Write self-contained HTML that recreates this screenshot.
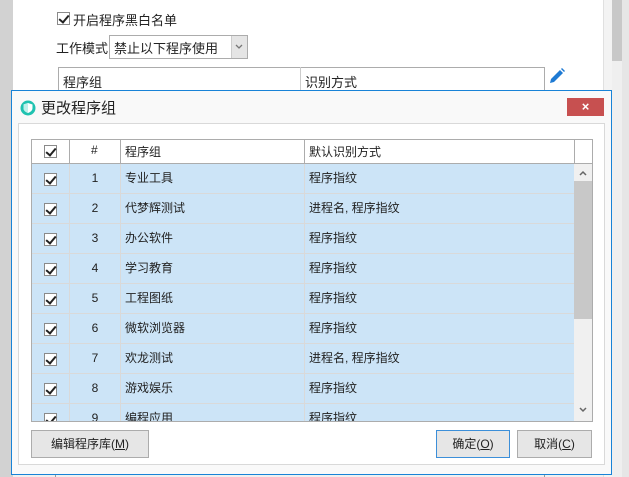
<!DOCTYPE html>
<html><head><meta charset="utf-8"><style>
*{margin:0;padding:0;box-sizing:border-box}
body{width:629px;height:477px;position:relative;overflow:hidden;background:#fff;font-family:"Liberation Sans","Noto Sans CJK SC",sans-serif;font-size:12px;color:#222}
.a{position:absolute}
.cb{position:absolute;width:13px;height:13px;border:1px solid #8a8a8a;background:#fff}
.cb:after{content:"";position:absolute;left:3px;top:0px;width:4px;height:8px;border:solid #222;border-width:0 2px 2px 0;transform:rotate(40deg)}
.btn{position:absolute;height:28px;border:1px solid #acacac;background:#e6e6e6;text-align:center;line-height:26px;font-size:12px}
.row{position:absolute;left:0;width:543px;height:30px;background:#cce4f7;border-bottom:1px solid #d9d9d9}
.row div{position:absolute;top:0;line-height:30px}
</style></head><body>
<div class="a" style="left:0;top:0;width:13px;height:477px;background:#d2d2d2"></div>
<div class="a" style="left:603px;top:0;width:1px;height:477px;background:#e0e0e0"></div>
<div class="a" style="left:604px;top:0;width:25px;height:477px;background:#f3f3f3"></div>
<div class="a" style="left:612px;top:0;width:10px;height:61px;background:#c8c8c8"></div>
<div class="a" style="left:612px;top:61px;width:10px;height:416px;background:#efefef"></div>
<div class="a" style="left:622px;top:0;width:7px;height:477px;background:#e6e6e6"></div>
<div class="a" style="left:13px;top:474px;width:590px;height:3px;background:#f0f0f0"></div>
<div class="a" style="left:55px;top:474px;width:1px;height:3px;background:#999"></div>
<div class="a" style="left:544px;top:474px;width:1px;height:3px;background:#999"></div>

<div class="cb" style="left:57px;top:12px"></div>
<div class="a" style="left:73px;top:10px;font-size:13px">开启程序黑白名单</div>
<div class="a" style="left:56px;top:38px;font-size:13px">工作模式</div>
<div class="a" style="left:109px;top:35px;width:139px;height:24px;border:1px solid #acacac;background:#fff"></div>
<div class="a" style="left:114px;top:38px;font-size:13px">禁止以下程序使用</div>
<div class="a" style="left:231px;top:36px;width:16px;height:22px;background:#e5e5e5;border-left:1px solid #ccc"></div>
<svg class="a" style="left:235px;top:44px" width="8" height="6" viewBox="0 0 8 6"><path d="M1 1 L4 4 L7 1" stroke="#777" stroke-width="1.3" fill="none"/></svg>
<div class="a" style="left:58px;top:67px;width:487px;height:30px;border:1px solid #acacac;background:#fff"></div>
<div class="a" style="left:300px;top:67px;width:1px;height:30px;background:#ccc"></div>
<div class="a" style="left:63px;top:72px;font-size:13px">程序组</div>
<div class="a" style="left:305px;top:72px;font-size:13px">识别方式</div>
<svg class="a" style="left:548px;top:67px" width="18" height="18" viewBox="0 0 18 18"><path d="M2 16 L3 12 L12 3 L15 6 L6 15 Z" fill="#1e7ad3"/><path d="M13 2 L14 1 L17 4 L16 5Z" fill="#1e7ad3"/></svg>

<div class="a" style="left:11px;top:90px;width:601px;height:385px;border:1px solid #1883d7;background:#f9f9f9"></div>
<svg class="a" style="left:20px;top:100px" width="16" height="16" viewBox="0 0 16 16"><circle cx="8" cy="8" r="7.5" fill="#1fc2b0"/><path d="M8 3 L12.5 4.5 V8 C12.5 10.5 10.5 12 8 13 C5.5 12 3.5 10.5 3.5 8 V4.5 Z" fill="#fff"/><path d="M8 3 V13 C5.5 12 3.5 10.5 3.5 8 V4.5Z" fill="#bff0ea"/></svg>
<div class="a" style="left:41px;top:97px;font-size:15px;color:#222">更改程序组</div>
<div class="a" style="left:567px;top:98px;width:37px;height:18px;background:#c75050;color:#fff;text-align:center;line-height:18px;font-size:13px;font-weight:bold">×</div>
<div class="a" style="left:18px;top:123px;width:587px;height:342px;border:1px solid #d9d9d9;background:#fff"></div>

<div class="a" style="left:31px;top:139px;width:562px;height:283px;border:1px solid #acacac;background:#fff;overflow:hidden">
 <div class="a" style="left:0;top:0;width:560px;height:24px;border-bottom:1px solid #acacac;background:#fff"></div>
 <div class="a" style="left:37px;top:0;width:1px;height:24px;background:#acacac"></div>
 <div class="a" style="left:88px;top:0;width:1px;height:24px;background:#acacac"></div>
 <div class="a" style="left:272px;top:0;width:1px;height:24px;background:#acacac"></div>
 <div class="a" style="left:542px;top:0;width:1px;height:24px;background:#acacac"></div>
 <div class="cb" style="left:12px;top:5px"></div>
 <div class="a" style="left:59px;top:3px">#</div>
 <div class="a" style="left:93px;top:3px">程序组</div>
 <div class="a" style="left:277px;top:3px">默认识别方式</div>
 <div id="rows"></div>
 <div class="a" style="left:542px;top:24px;width:18px;height:259px;background:#f0f0f0"></div>
 <div class="a" style="left:542px;top:41px;width:18px;height:138px;background:#c8c8c8"></div>
 <svg class="a" style="left:547px;top:30px" width="8" height="6" viewBox="0 0 8 6"><path d="M1 5 L4 2 L7 5" stroke="#666" stroke-width="1.5" fill="none"/></svg>
 <svg class="a" style="left:547px;top:267px" width="8" height="6" viewBox="0 0 8 6"><path d="M1 1 L4 4 L7 1" stroke="#666" stroke-width="1.5" fill="none"/></svg>
</div>
<script>
var d=[["1","专业工具","程序指纹"],["2","代梦辉测试","进程名, 程序指纹"],["3","办公软件","程序指纹"],["4","学习教育","程序指纹"],["5","工程图纸","程序指纹"],["6","微软浏览器","程序指纹"],["7","欢龙测试","进程名, 程序指纹"],["8","游戏娱乐","程序指纹"],["9","编程应用","程序指纹"]];
var h="";d.forEach(function(r,i){var t=24+i*30;
h+='<div class="row" style="top:'+t+'px"><div style="left:37px;width:1px;height:30px;background:#d9d9d9"></div><div style="left:88px;width:1px;height:30px;background:#d9d9d9"></div><div style="left:272px;width:1px;height:30px;background:#d9d9d9"></div><div class="cb" style="left:12px;top:9px;position:absolute"></div><div style="left:38px;width:50px;text-align:center;top:-1px">'+r[0]+'</div><div style="left:93px;top:-1px">'+r[1]+'</div><div style="left:277px;top:-1px">'+r[2]+'</div></div>';});
document.getElementById('rows').outerHTML=h;
</script>

<div class="btn" style="left:31px;top:430px;width:118px">编辑程序库(<u>M</u>)</div>
<div class="btn" style="left:436px;top:430px;width:74px;border-color:#3c8fd9">确定(<u>O</u>)</div>
<div class="btn" style="left:517px;top:430px;width:75px">取消(<u>C</u>)</div>
</body></html>
